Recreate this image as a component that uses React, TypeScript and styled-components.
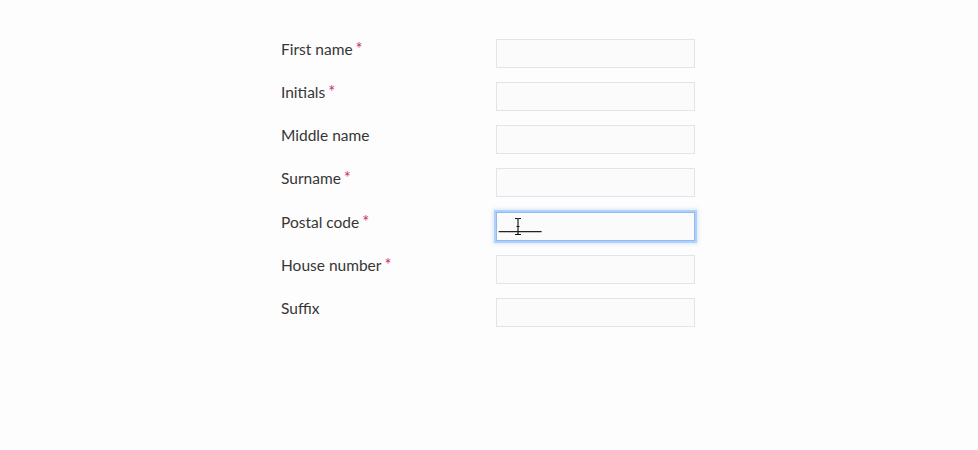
import React from "react";
import styled, { createGlobalStyle } from "styled-components";

const Global = createGlobalStyle`
  html, body { margin: 0; padding: 0; background: #fdfdfd; }
  body { font-family: Lato, "Open Sans", sans-serif; }
`;

const Page = styled.div`
  width: 978px;
  height: 450px;
  padding-top: 38px;
  padding-left: 281px;
  box-sizing: border-box;
`;

const Form = styled.form`
  width: 414px;
  display: flex;
  flex-direction: column;
  gap: 13.17px;
`;

const Row = styled.div`
  display: grid;
  grid-template-columns: 215px 199px;
  align-items: start;
`;

const Label = styled.label`
  font-family: Lato, sans-serif;
  font-size: 15.5px;
  line-height: 20px;
  padding-top: 1px;
  color: #363636;
`;

const Star = styled.span`
  color: #c8386c;
  margin-left: 3px;
  font-size: 16.5px;
  position: relative;
  top: 0px;
`;

const Field = styled.div<{ $focused?: boolean }>`
  position: relative;
  margin-top: 1px;
  height: 29px;
  box-sizing: border-box;
  background: #fbfbfc;
  border: 1px solid ${(p) => (p.$focused ? "#8fbbf2" : "#e3e3e8")};
  box-shadow: ${(p) => (p.$focused ? "0 0 0 2px rgba(160, 200, 248, 0.75), 0 0 4px 3px rgba(170, 205, 250, 0.45)" : "none")};
  display: flex;
  align-items: center;
  padding-left: 2px;
`;

const Mask = styled.span`
  font-family: "Liberation Sans", sans-serif;
  font-size: 19px;
  line-height: 20px;
  color: #222;
  margin-top: -9px;
`;

const Cursor = styled.svg`
  position: absolute;
  left: 17px;
  top: 4px;
`;

const fields: { label: string; req: boolean; focused?: boolean }[] = [
  { label: "First name", req: true },
  { label: "Initials", req: true },
  { label: "Middle name", req: false },
  { label: "Surname", req: true },
  { label: "Postal code", req: true, focused: true },
  { label: "House number", req: true },
  { label: "Suffix", req: false },
];

export default function App() {
  return (
    <Page>
      <Global />
      <Form>
        {fields.map((f) => (
          <Row key={f.label}>
            <Label>
              {f.label}
              {f.req && <Star>*</Star>}
            </Label>
            <Field $focused={f.focused}>
              {f.focused && (
                <>
                  <Mask>____</Mask>
                  <Cursor width="8" height="19" viewBox="0 0 8 19">
                    <path
                      d="M1 1.5 H3 Q4 1.5 4 3 V16 Q4 17.5 3 17.5 H1 M7 1.5 H5 Q4 1.5 4 3 V16 Q4 17.5 5 17.5 H7 M2.5 9.5 H5.5"
                      fill="none"
                      stroke="#111"
                      strokeWidth="1.1"
                    />
                  </Cursor>
                </>
              )}
            </Field>
          </Row>
        ))}
      </Form>
    </Page>
  );
}
